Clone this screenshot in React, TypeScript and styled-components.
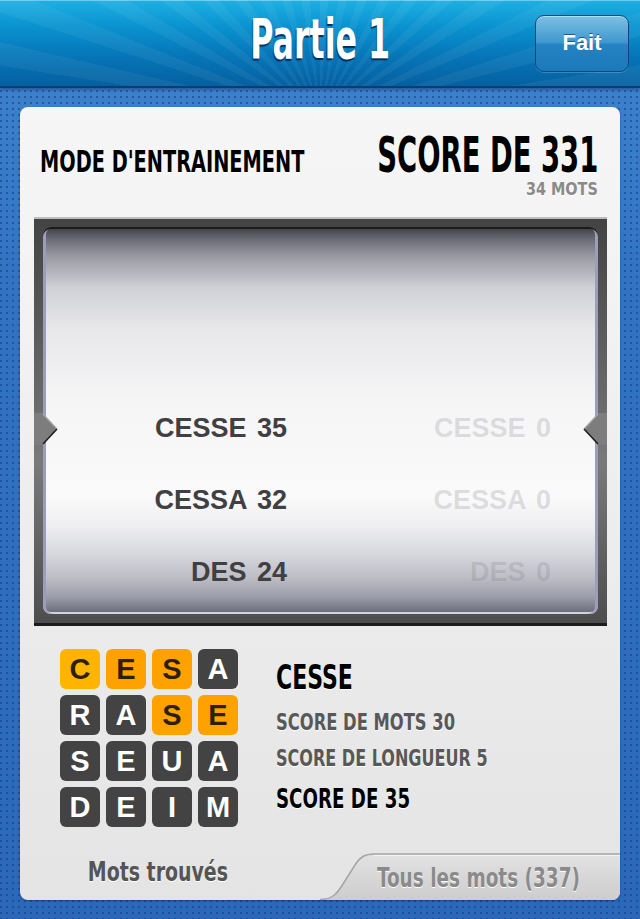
import React from "react";
import styled, { createGlobalStyle } from "styled-components";

const CONDENSED = `"DejaVu Sans Condensed", "DejaVu Sans", sans-serif`;
const SANS = `"Liberation Sans", Arial, sans-serif`;

const GlobalStyle = createGlobalStyle`
  html, body {
    margin: 0;
    padding: 0;
    width: 640px;
    height: 919px;
    overflow: hidden;
  }
  body {
    font-family: ${SANS};
    background-color: #3478c4;
  }
`;

const Screen = styled.div`
  width: 640px;
  height: 919px;
  display: flex;
  flex-direction: column;
  background-color: #3474c2;
  background-image:
    radial-gradient(circle at 1px 1px, rgba(18, 60, 130, 0.55) 0.9px, transparent 1.3px),
    linear-gradient(to bottom, #4186d0 0%, #3274c2 30%, #2c68b8 100%);
  background-size: 6px 6px, 100% 100%;
`;

const NavBar = styled.header`
  position: relative;
  height: 86px;
  flex: none;
  display: grid;
  grid-template-columns: 1fr auto 1fr;
  align-items: center;
  padding: 0 11px;
  border-bottom: 2px solid #0b3e6e;
  background-image:
    repeating-conic-gradient(from 0deg at 50% 135%, rgba(255, 255, 255, 0.05) 0deg 4deg, rgba(255, 255, 255, 0) 4deg 9deg),
    linear-gradient(to bottom, #1fb0e2 0%, #0a93d0 30%, #0676b8 65%, #0560a0 100%);
  box-shadow: inset 0 1px 0 rgba(255, 255, 255, 0.35), 0 2px 3px rgba(0, 20, 60, 0.35);
`;

const Title = styled.h1`
  grid-column: 2;
  margin: 0 0 7px 0;
  font-family: ${CONDENSED};
  font-weight: 700;
  font-size: 55px;
  line-height: 1;
  color: #fff;
  text-shadow: -1px 2px 1px rgba(0, 30, 70, 0.85);
`;

const DoneButton = styled.button`
  grid-column: 3;
  justify-self: end;
  width: 94px;
  height: 57px;
  border-radius: 9px;
  border: 1px solid #07497e;
  background: linear-gradient(to bottom, #7cc0e4 0%, #3f98cf 48%, #2483c3 52%, #1d79b9 100%);
  box-shadow: inset 0 1px 0 rgba(255, 255, 255, 0.45), 0 1px 0 rgba(255, 255, 255, 0.2);
  color: #fff;
  font-family: ${SANS};
  font-weight: 700;
  font-size: 22px;
  text-shadow: 0 -1px 0 rgba(0, 40, 90, 0.6);
  padding: 0;
`;

const Body = styled.main`
  flex: 1;
  padding: 19px 20px 19px 20px;
  display: flex;
`;

const Card = styled.section`
  flex: 1;
  display: flex;
  flex-direction: column;
  border-radius: 8px;
  overflow: hidden;
  background: linear-gradient(to bottom, #f6f6f6 0%, #efefef 45%, #e4e4e4 100%);
  box-shadow: 0 1px 2px rgba(0, 20, 60, 0.4);
`;

/* horizontally compressed lettering, used for the display type */
const Squeeze = styled.span<{ $sx: number; $origin?: string }>`
  display: inline-block;
  white-space: nowrap;
  transform: scaleX(${(p) => p.$sx});
  transform-origin: ${(p) => p.$origin ?? "left"} center;
`;

const CardHead = styled.div`
  height: 110px;
  flex: none;
  box-sizing: border-box;
  padding: 23px 22px 0 20px;
  display: flex;
  justify-content: space-between;
  align-items: baseline;
`;

const ModeLabel = styled.div`
  min-width: 0;
  font-family: ${CONDENSED};
  font-weight: 700;
  font-size: 30px;
  line-height: 1;
  color: #000;
  text-shadow: 0 1px 0 #fff;
`;

const ScoreBlock = styled.div`
  min-width: 0;
  display: flex;
  flex-direction: column;
  align-items: flex-end;
`;

const TotalScore = styled.div`
  font-family: ${CONDENSED};
  font-weight: 700;
  font-size: 50px;
  line-height: 1;
  color: #000;
  text-shadow: 0 1px 0 #fff;
`;

const WordCount = styled.div`
  font-family: ${CONDENSED};
  font-weight: 700;
  font-size: 18px;
  line-height: 1;
  color: #8a8a8a;
  text-shadow: 0 1px 0 #fff;
`;

const PickerFrame = styled.div`
  height: 409px;
  flex: none;
  box-sizing: border-box;
  margin: 0 13px 0 14px;
  padding: 8px 9px 9px 9px;
  border-top: 2px solid #bdbdbd;
  border-bottom: 3px solid #1c1c1c;
  background: linear-gradient(to bottom, #434343 0%, #6a6a6a 45%, #7a7a7a 60%, #4d4d4d 100%);
`;

const PickerWindow = styled.div`
  position: relative;
  height: 100%;
  box-sizing: border-box;
  border-radius: 8px;
  display: flex;
  flex-direction: column;
  justify-content: flex-end;
  padding-bottom: 6px;
  background: linear-gradient(
    to bottom,
    #3c3c42 0px,
    #6a6b74 12px,
    #9a9ba4 30px,
    #cfd0d5 60px,
    #e7e7ea 100px,
    #f5f5f6 170px,
    #fafafa 270px,
    #eeeef1 300px,
    #d6d7dc 328px,
    #bdbec6 350px,
    #9c9daa 370px,
    #70717f 384px,
    #5b5c6c 390px
  );
  box-shadow:
    inset 0 2px 0 #1b1b1b,
    inset 3px 0 0 #9c9db8,
    inset -3px 0 0 #9c9db8,
    inset 0 -2px 0 #d4d4d8;
`;

const Notch = styled.svg<{ $side: "left" | "right" }>`
  position: absolute;
  top: 186px;
  ${(p) => (p.$side === "left" ? "left: -9px;" : "right: -9px;")}
  width: 24px;
  height: 32px;
`;

const ResultRow = styled.div`
  height: 72px;
  display: grid;
  grid-template-columns: 244px 264px;
  align-items: center;
`;

const ResultCell = styled.div<{ $ghost?: boolean }>`
  justify-self: end;
  font-family: ${SANS};
  font-weight: 700;
  font-size: 27px;
  line-height: 1;
  word-spacing: 3px;
  color: ${(p) => (p.$ghost ? "rgba(120, 120, 130, 0.22)" : "#404042")};
`;

const LowerArea = styled.div`
  height: 227px;
  flex: none;
  box-sizing: border-box;
  padding: 23px 0 0 40px;
  display: flex;
  gap: 38px;
`;

const Board = styled.div`
  display: grid;
  grid-template-columns: repeat(4, 40px);
  grid-auto-rows: 40px;
  gap: 6px;
  align-content: start;
`;

const Tile = styled.div<{ $tone: "dark" | "hot" | "first" }>`
  border-radius: 6px;
  display: flex;
  align-items: center;
  justify-content: center;
  font-family: ${SANS};
  font-weight: 700;
  font-size: 29px;
  line-height: 1;
  background: ${(p) => (p.$tone === "dark" ? "#434343" : p.$tone === "first" ? "#ffb400" : "#ffa200")};
  color: ${(p) => (p.$tone === "dark" ? "#ffffff" : "#2e1f00")};
`;

const Details = styled.div`
  padding-top: 11px;
  display: flex;
  flex-direction: column;
`;

const DetailLine = styled.div<{ $size: number; $muted?: boolean; $gap: number }>`
  margin-top: ${(p) => p.$gap}px;
  font-family: ${CONDENSED};
  font-weight: 700;
  font-size: ${(p) => p.$size}px;
  line-height: 1;
  color: ${(p) => (p.$muted ? "#585858" : "#000")};
  text-shadow: 0 1px 0 #fff;
`;

const TabBar = styled.nav`
  height: 47px;
  flex: none;
  display: flex;
`;

const Tab = styled.div<{ $active?: boolean }>`
  position: relative;
  width: 300px;
  box-sizing: border-box;
  display: flex;
  align-items: center;
  justify-content: center;
  padding: ${(p) => (p.$active ? "0 24px 11px 0" : "1px 0 0 18px")};
  font-family: ${CONDENSED};
  font-weight: 700;
  font-size: 27px;
  line-height: 1;
  color: ${(p) => (p.$active ? "#555" : "#8a8a8a")};
  text-shadow: 0 1px 0 #fff;
`;

const TabShape = styled.svg`
  position: absolute;
  inset: 0;
  width: 100%;
  height: 100%;
  z-index: 0;
`;

const TabLabel = styled.span`
  position: relative;
  z-index: 1;
`;

type Tone = "dark" | "hot" | "first";

const board: [string, Tone][] = [
  ["C", "first"], ["E", "hot"], ["S", "hot"], ["A", "dark"],
  ["R", "dark"], ["A", "dark"], ["S", "hot"], ["E", "hot"],
  ["S", "dark"], ["E", "dark"], ["U", "dark"], ["A", "dark"],
  ["D", "dark"], ["E", "dark"], ["I", "dark"], ["M", "dark"],
];

const results = [
  { word: "CESSE", mine: 35 },
  { word: "CESSA", mine: 32 },
  { word: "DES", mine: 24 },
];

function NotchMark({ side }: { side: "left" | "right" }) {
  const flip = side === "right" ? "translate(24 0) scale(-1 1)" : undefined;
  return (
    <Notch $side={side} viewBox="0 0 24 32" aria-hidden>
      <g transform={flip}>
        <path d="M0 0 L9 0 L9 1 L23 16 L9 31 L9 32 L0 32 Z" fill="#7d7d7d" />
        <path d="M9 1 L23 16" stroke="#a8a8a8" strokeWidth="1.2" fill="none" />
        <path d="M23 16 L9 31" stroke="#1e1e1e" strokeWidth="1.6" fill="none" />
      </g>
    </Notch>
  );
}

export default function App() {
  return (
    <>
      <GlobalStyle />
      <Screen>
        <NavBar>
          <Title>
            <Squeeze $sx={0.64} $origin="center">Partie 1</Squeeze>
          </Title>
          <DoneButton type="button">Fait</DoneButton>
        </NavBar>
        <Body>
          <Card>
            <CardHead>
              <ModeLabel>
                <Squeeze $sx={0.716}>MODE D'ENTRAINEMENT</Squeeze>
              </ModeLabel>
              <ScoreBlock>
                <TotalScore>
                  <Squeeze $sx={0.61} $origin="right">SCORE DE 331</Squeeze>
                </TotalScore>
                <WordCount>
                  <Squeeze $sx={0.89} $origin="right">34 MOTS</Squeeze>
                </WordCount>
              </ScoreBlock>
            </CardHead>

            <PickerFrame>
              <PickerWindow>
                <NotchMark side="left" />
                <NotchMark side="right" />
                {results.map((r) => (
                  <ResultRow key={r.word}>
                    <ResultCell>
                      {r.word} {r.mine}
                    </ResultCell>
                    <ResultCell $ghost>
                      {r.word} 0
                    </ResultCell>
                  </ResultRow>
                ))}
              </PickerWindow>
            </PickerFrame>

            <LowerArea>
              <Board>
                {board.map(([letter, tone], i) => (
                  <Tile key={i} $tone={tone}>
                    {letter}
                  </Tile>
                ))}
              </Board>
              <Details>
                <DetailLine $size={34} $gap={0}>
                  <Squeeze $sx={0.72}>CESSE</Squeeze>
                </DetailLine>
                <DetailLine $size={23} $gap={17} $muted>
                  <Squeeze $sx={0.79}>SCORE DE MOTS 30</Squeeze>
                </DetailLine>
                <DetailLine $size={23} $gap={13} $muted>
                  <Squeeze $sx={0.775}>SCORE DE LONGUEUR 5</Squeeze>
                </DetailLine>
                <DetailLine $size={27} $gap={15}>
                  <Squeeze $sx={0.75}>SCORE DE 35</Squeeze>
                </DetailLine>
              </Details>
            </LowerArea>

            <TabBar>
              <Tab $active>
                <TabLabel>
                  <Squeeze $sx={0.78} $origin="center">Mots trouvés</Squeeze>
                </TabLabel>
              </Tab>
              <Tab>
                <TabShape viewBox="0 0 300 47" preserveAspectRatio="none" aria-hidden>
                  <defs>
                    <linearGradient id="tabFill" x1="0" y1="0" x2="0" y2="1">
                      <stop offset="0" stopColor="#e2e2e2" />
                      <stop offset="1" stopColor="#cdcdcd" />
                    </linearGradient>
                  </defs>
                  <path
                    d="M0 47 C 12 47, 17 41, 23 31 L 35 12 C 40 4, 45 1, 54 1 L 300 1 L 300 47 Z"
                    fill="url(#tabFill)"
                  />
                  <path
                    d="M0 46.5 C 12 46.5, 17 41, 23 31 L 35 12 C 40 4, 45 1, 54 1 L 300 1"
                    fill="none"
                    stroke="#a5a5a5"
                    strokeWidth="1.5"
                  />
                  <path d="M 54 2.5 L 300 2.5" stroke="#f4f4f4" strokeWidth="1" />
                </TabShape>
                <TabLabel>
                  <Squeeze $sx={0.76} $origin="center">Tous les mots (337)</Squeeze>
                </TabLabel>
              </Tab>
            </TabBar>
          </Card>
        </Body>
      </Screen>
    </>
  );
}
